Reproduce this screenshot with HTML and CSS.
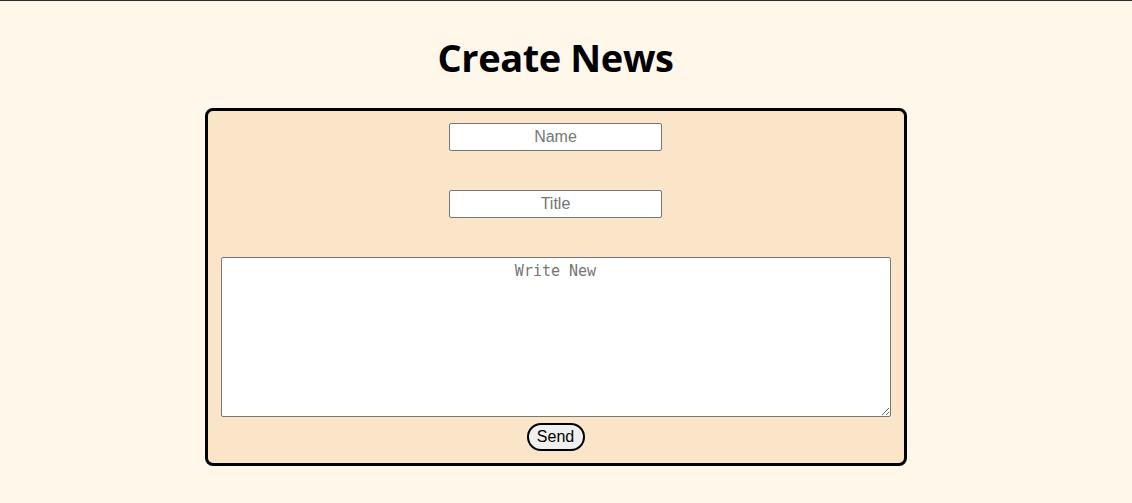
FILE: index.html
```html
<!DOCTYPE html>
<html>
<head>
<meta charset="utf-8">
<link rel="stylesheet" href="styles.css">
</head>
<body>
<div class="topline"></div>
<main class="page">
  <h1 class="title">Create News</h1>
  <form class="card">
    <input class="field" type="text" placeholder="Name">
    <input class="field" type="text" placeholder="Title">
    <textarea class="body-text" placeholder="Write New"></textarea>
    <button class="send" type="button">Send</button>
  </form>
</main>
</body>
</html>
```

FILE: styles.css
```css
html, body {
  margin: 0;
  padding: 0;
  background: #fef7ea;
}
.topline {
  height: 1px;
  background: #2b2b2b;
}
.page {
  width: 1111px;
  display: flex;
  flex-direction: column;
  align-items: center;
}
.title {
  margin: 27px 0 0;
  height: 80px;
  font-family: "Open Sans", "Noto Sans", sans-serif;
  font-weight: 700;
  font-size: 38px;
  line-height: 58px;
  color: #000;
  letter-spacing: -0.4px;
}
.card {
  box-sizing: border-box;
  width: 702px;
  border: 3px solid #000;
  border-radius: 8px;
  background: #fae5c9;
  padding: 12px 13px 12px;
  display: flex;
  flex-direction: column;
  align-items: center;
}
.field {
  box-sizing: border-box;
  width: 213px;
  height: 28px;
  margin: 0 0 39px;
  border: 1px solid #767676;
  border-radius: 2px;
  background: #fff;
  font-family: "Liberation Sans", Arial, sans-serif;
  font-size: 16px;
  text-align: center;
  padding: 1px 2px;
}
.field::placeholder {
  color: #757575;
}
.body-text {
  box-sizing: border-box;
  width: 100%;
  height: 160px;
  margin: 0;
  border: 1px solid #767676;
  border-radius: 2px;
  background: #fff;
  font-family: "DejaVu Sans Mono", "Liberation Mono", monospace;
  font-size: 15px;
  text-align: center;
  padding: 4px 2px;
  resize: both;
}
.body-text::placeholder {
  color: #757575;
}
.send {
  box-sizing: border-box;
  margin-top: 6px;
  width: 58px;
  height: 28px;
  border: 2px solid #000;
  border-radius: 14px;
  background: #efefef;
  font-family: "Liberation Sans", Arial, sans-serif;
  font-size: 16px;
  color: #000;
  padding: 0;
}
```
